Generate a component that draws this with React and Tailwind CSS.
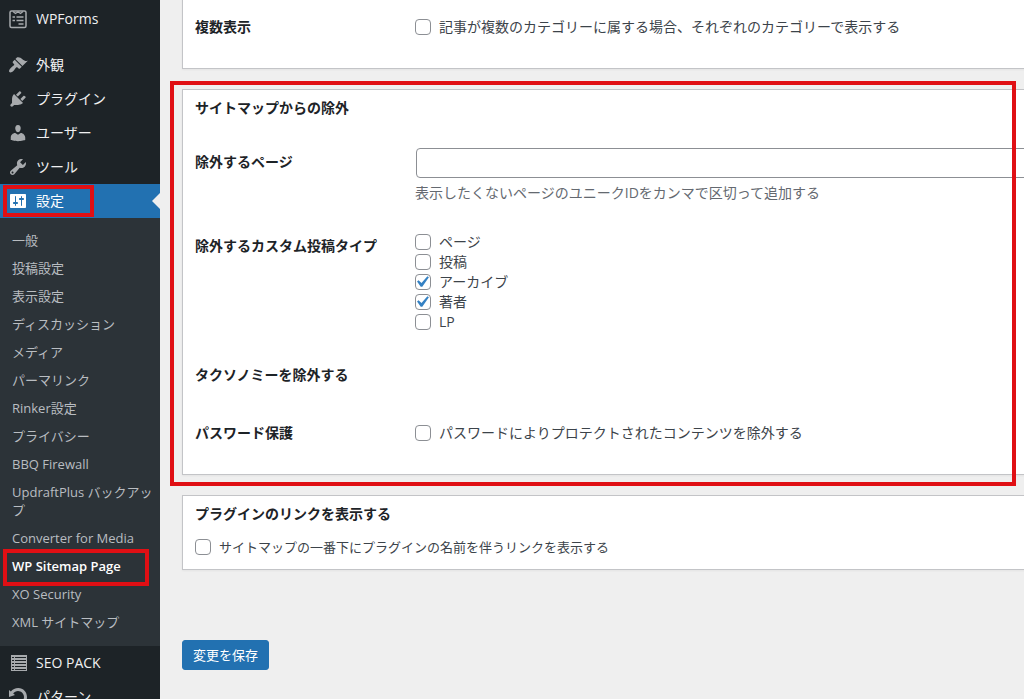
import React, { useState } from "react";
import clsx from "clsx";

const icons = {
  forms: (
    <g fill="none" stroke="currentColor" strokeWidth="1.5">
      <rect x="2" y="2" width="16" height="16.5" rx="1.5" />
      <path d="M5 2.5l2.5 2L10 2.8l2.5 1.7L15 2.5" strokeWidth="1.3" />
      <path d="M4.5 8h2.5M8.5 8h7M4.5 11.5h2.5M8.5 11.5h7M10.5 15h5" />
    </g>
  ),
  appearance: (
    <path d="M14.48 11.06L7.41 3.99l1.5-1.5c.5-.56 2.3-.47 3.51.32 1.21.8 1.43 1.28 2.91 2.1 1.18.64 2.45 1.26 4.45.85zm-.71.71L6.7 4.7 4.93 6.47c-.39.39-.39 1.02 0 1.41l1.06 1.06c.39.39.39 1.03 0 1.42-.6.6-1.43 1.11-2.21 1.69-.35.26-.7.53-1.01.84C1.43 14.23.4 16.08 1.4 17.07c.99 1 2.84-.03 4.18-1.36.31-.31.58-.66.85-1.02.57-.78 1.08-1.61 1.69-2.21.39-.39 1.02-.39 1.41 0l1.06 1.06c.39.39 1.02.39 1.41 0z" />
  ),
  plugins: (
    <path d="M13.11 4.36L9.87 7.6 8 5.73l3.24-3.24c.35-.34 1.05-.2 1.56.32.52.51.66 1.21.31 1.55zm-8 1.77l.91-1.12 9.01 9.01-1.19.84c-.71.71-2.63 1.16-3.82 1.16H6.14L4.9 17.26c-.59.59-1.54.59-2.12 0-.59-.58-.59-1.53 0-2.12l1.24-1.24v-3.88c0-1.13.4-3.19 1.09-3.89zm7.26 3.97l3.24-3.24c.34-.35 1.04-.21 1.55.31.52.51.66 1.21.31 1.55l-3.24 3.25z" />
  ),
  users: (
    <path d="M10 9.25c-2.27 0-2.73-3.44-2.73-3.44C7 4.02 7.82 2 9.97 2c2.16 0 2.98 2.02 2.71 3.81 0 0-.41 3.44-2.68 3.44zm0 2.57L12.72 10c2.39 0 4.52 2.33 4.52 4.53v2.49s-3.65 1.13-7.24 1.13c-3.65 0-7.24-1.13-7.24-1.13v-2.49c0-2.25 1.94-4.48 4.47-4.48z" />
  ),
  tools: (
    <path d="M16.68 9.77c-1.34 1.34-3.3 1.67-4.95.99l-5.41 6.52c-.99.99-2.59.99-3.58 0s-.99-2.59 0-3.57l6.52-5.42c-.68-1.65-.35-3.61.99-4.95 1.28-1.28 3.12-1.62 4.72-1.06l-2.89 2.89 2.82 2.82 2.86-2.87c.53 1.58.18 3.39-1.08 4.65zM3.81 16.21c.4.39 1.04.39 1.43 0 .4-.4.4-1.04 0-1.43-.39-.4-1.03-.4-1.43 0-.39.39-.39 1.03 0 1.43z" />
  ),
  settings: (
    <path d="M18 16V4c0-.55-.45-1-1-1H3c-.55 0-1 .45-1 1v12c0 .55.45 1 1 1h14c.55 0 1-.45 1-1zM8 11h1c.55 0 1 .45 1 1s-.45 1-1 1H8v1.5c0 .28-.22.5-.5.5s-.5-.22-.5-.5V13H6c-.55 0-1-.45-1-1s.45-1 1-1h1V5.5c0-.28.22-.5.5-.5s.5.22.5.5V11zm5-2h-1c-.55 0-1-.45-1-1s.45-1 1-1h1V5.5c0-.28.22-.5.5-.5s.5.22.5.5V7h1c.55 0 1 .45 1 1s-.45 1-1 1h-1v5.5c0 .28-.22.5-.5.5s-.5-.22-.5-.5V9z" />
  ),
  list: (
    <path
      fillRule="evenodd"
      d="M3 2h16v16H3zM4 4v1h2V4zM7 4v1h11V4zM4 7v1h2V7zM7 7v1h11V7zM4 10v1h2v-1zM7 10v1h11v-1zM4 13v1h2v-1zM7 13v1h11v-1zM4 16v1h2v-1zM7 16v1h11v-1z"
    />
  ),
  rotate: (
    <path d="M10.25 1.02c5.1 0 8.75 4.04 8.75 9s-3.65 9-8.75 9c-3.2 0-6.02-1.59-7.68-3.99l2.59-1.52c1.1 1.5 2.86 2.51 4.84 2.51 3.3 0 6-2.79 6-6s-2.7-6-6-6c-1.97 0-3.72 1-4.82 2.49L7 8.02l-6 2v-7L2.89 4.6c1.69-2.17 4.36-3.58 7.36-3.58z" />
  ),
};

const subItems = [
  "一般",
  "投稿設定",
  "表示設定",
  "ディスカッション",
  "メディア",
  "パーマリンク",
  "Rinker設定",
  "プライバシー",
  "BBQ Firewall",
  "UpdraftPlus バックアップ",
  "Converter for Media",
  "WP Sitemap Page",
  "XO Security",
  "XML サイトマップ",
];

const postTypes = [
  { id: "page", label: "ページ", checked: false },
  { id: "post", label: "投稿", checked: false },
  { id: "archive", label: "アーカイブ", checked: true },
  { id: "author", label: "著者", checked: true },
  { id: "lp", label: "LP", checked: false },
];

const Highlight = ({ className }) => (
  <span
    className={clsx(
      "pointer-events-none absolute border-4 border-[#e00f14]",
      className
    )}
  />
);

const MenuItem = ({ icon, label, active }) => (
  <a
    href="#"
    className={clsx(
      "relative flex h-[34px] items-center text-sm",
      active ? "bg-[#2271b1] text-white" : "text-[#f0f0f1] hover:text-[#72aee6]"
    )}
  >
    <span className="flex w-9 justify-center">
      <svg
        viewBox="0 0 20 20"
        className={clsx(
          "size-5 fill-current",
          active ? "text-white" : "text-[#a7aaad]"
        )}
      >
        {icons[icon]}
      </svg>
    </span>
    {label}
    {active && (
      <>
        <svg
          viewBox="0 0 8 16"
          className="absolute right-0 h-4 w-2 fill-[#efefef]"
        >
          <path d="M8 0v16L0 8z" />
        </svg>
        <Highlight className="top-px left-[3px] h-8 w-[91px]" />
      </>
    )}
  </a>
);

const Checkbox = ({ id, label, defaultChecked = false, className }) => {
  const [checked, setChecked] = useState(defaultChecked);
  return (
    <div className={clsx("flex items-center gap-2 leading-5", className)}>
      <span className="grid size-4 shrink-0 place-items-center">
        <input
          id={id}
          type="checkbox"
          checked={checked}
          onChange={(e) => setChecked(e.target.checked)}
          className="col-start-1 row-start-1 size-4 appearance-none rounded border border-[#8c8f94] bg-white"
        />
        {checked && (
          <svg
            viewBox="4 3 14 14"
            className="pointer-events-none col-start-1 row-start-1 size-4 fill-[#3582c4]"
          >
            <path d="M14.83 4.89l1.34.94-5.81 8.38H9.02L5.78 9.67l1.34-1.25 2.57 2.4z" />
          </svg>
        )}
      </span>
      <label htmlFor={id}>{label}</label>
    </div>
  );
};

const Row = ({ title, htmlFor, children }) => (
  <div className="grid grid-cols-[220px_1fr]">
    {htmlFor ? (
      <label
        htmlFor={htmlFor}
        className="py-5 leading-[18px] font-semibold text-[#1d2327]"
      >
        {title}
      </label>
    ) : (
      <div className="py-5 leading-[18px] font-semibold text-[#1d2327]">
        {title}
      </div>
    )}
    <div className="pt-[15px] pb-[14px]">{children}</div>
  </div>
);

const Card = ({ title, className, children }) => (
  <section
    className={clsx(
      "-mr-5 border border-[#c3c4c7] bg-white px-3 pb-3 shadow-xs",
      className
    )}
  >
    {title && (
      <h2 className="pt-2 leading-5 font-semibold text-[#1d2327]">{title}</h2>
    )}
    {children}
  </section>
);

const Sidebar = () => (
  <nav className="w-40 shrink-0 bg-[#1d2327] pt-0.5">
    <MenuItem icon="forms" label="WPForms" />
    <div className="mt-3">
      <MenuItem icon="appearance" label="外観" />
      <MenuItem icon="plugins" label="プラグイン" />
      <MenuItem icon="users" label="ユーザー" />
      <MenuItem icon="tools" label="ツール" />
      <MenuItem icon="settings" label="設定" active />
    </div>
    <ul className="bg-[#2c3338] pt-2 pb-[10px] text-[13px] leading-[18px]">
      {subItems.map((item) => {
        const current = item === "WP Sitemap Page";
        return (
          <li key={item} className="relative">
            <a
              href="#"
              className={clsx(
                "block py-[5px] pr-1 pl-3",
                current
                  ? "font-semibold text-white"
                  : "text-[#b9bdc1] hover:text-[#72aee6]"
              )}
            >
              {item}
            </a>
            {current && (
              <Highlight className="-top-[3px] left-[3px] h-[37px] w-[146px]" />
            )}
          </li>
        );
      })}
    </ul>
    <MenuItem icon="list" label="SEO PACK" />
    <MenuItem icon="rotate" label="パターン" />
  </nav>
);

const App = () => {
  const [excluded, setExcluded] = useState("");

  return (
    <div className="flex h-screen overflow-hidden bg-[#efefef] font-['Open_Sans','Noto_Sans_CJK_JP',sans-serif] text-sm text-[#3c434a]">
      <Sidebar />
      <main className="min-w-0 flex-1 overflow-hidden pl-[22px]">
        <form onSubmit={(e) => e.preventDefault()}>
          <Card className="-mt-[3px]">
            <Row title="複数表示">
              <Checkbox
                id="multiple"
                className="py-1"
                label="記事が複数のカテゴリーに属する場合、それぞれのカテゴリーで表示する"
              />
            </Row>
          </Card>

          <div className="relative mt-5">
            <Card title="サイトマップからの除外">
              <div className="mt-[15px]">
                <Row title="除外するページ" htmlFor="exclude-pages">
                  <input
                    id="exclude-pages"
                    type="text"
                    value={excluded}
                    onChange={(e) => setExcluded(e.target.value)}
                    className="-mr-4 ml-px block h-[30px] w-[calc(100%+16px)] rounded border border-[#8c8f94] bg-white px-2"
                  />
                  <p className="mt-[5px] leading-5 text-[#646970]">
                    表示したくないページのユニークIDをカンマで区切って追加する
                  </p>
                </Row>
                <Row title="除外するカスタム投稿タイプ">
                  {postTypes.map((t) => (
                    <Checkbox
                      key={t.id}
                      id={t.id}
                      label={t.label}
                      defaultChecked={t.checked}
                    />
                  ))}
                </Row>
                <Row title="タクソノミーを除外する" />
                <Row title="パスワード保護">
                  <Checkbox
                    id="password"
                    className="py-1"
                    label="パスワードによりプロテクトされたコンテンツを除外する"
                  />
                </Row>
              </div>
            </Card>
            <Highlight className="-top-2 right-2 -bottom-[11px] -left-3" />
          </div>

          <Card title="プラグインのリンクを表示する" className="mt-5">
            <Checkbox
              id="credit"
              className="mt-[13px] text-[13px]"
              label="サイトマップの一番下にプラグインの名前を伴うリンクを表示する"
            />
          </Card>

          <button
            type="submit"
            className="mt-[70px] h-[30px] rounded-[3px] border border-[#2271b1] bg-[#2271b1] px-[10px] text-[13px] text-white hover:bg-[#135e96]"
          >
            変更を保存
          </button>
        </form>
      </main>
    </div>
  );
};

export default App;
